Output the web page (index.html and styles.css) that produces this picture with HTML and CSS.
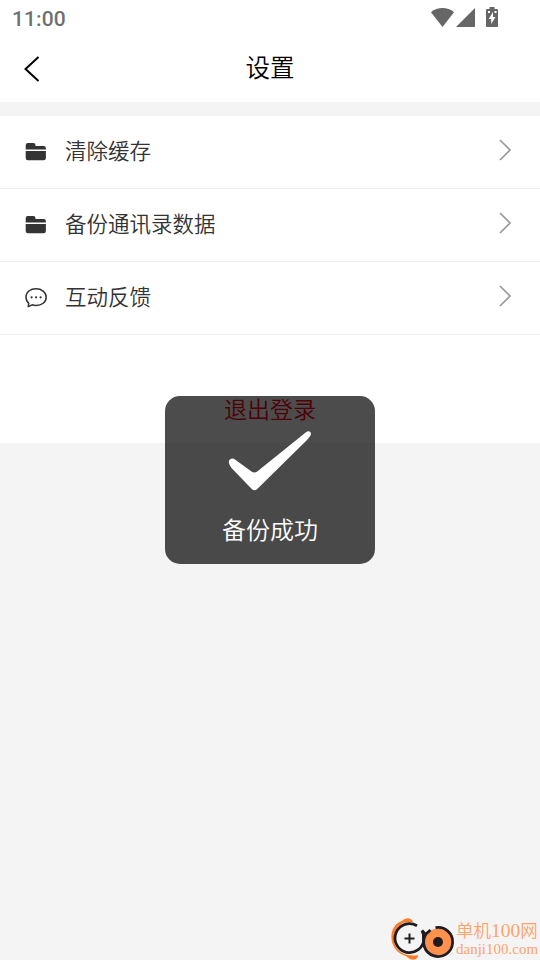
FILE: index.html
```html
<!DOCTYPE html>
<html lang="zh-CN">
<head>
<meta charset="utf-8">
<title>设置</title>
<link rel="stylesheet" href="styles.css">
</head>
<body>
<div class="screen">
  <header class="top">
    <div class="status">
      <span class="clock">11:00</span>
      <svg class="status-icons" width="70" height="28" viewBox="0 0 70 28">
        <path d="M1 11.200C7.500 5.600 17.500 5.600 24 11.200L12.500 26Z"/>
        <path d="M45 7V26H26Z"/>
        <path fill-rule="evenodd" d="M59.500 6h5v2H67a1 1 0 0 1 1 1v16a1 1 0 0 1-1 1H57a1 1 0 0 1-1-1V9a1 1 0 0 1 1-1h2.500ZM63 11l-4.300 7h2.500v5l4.300-7H63ZM58 10v2h2v-2ZM64.500 10v2h2v-2Z"/>
      </svg>
    </div>
    <div class="nav">
      <svg class="back" width="18" height="28" viewBox="0 0 18 28"><path d="M15.500 2 2.500 14 15.500 26"/></svg>
      <h1>设置</h1>
    </div>
  </header>
  <main>
    <ul class="list">
      <li>
        <svg class="icon" width="24" height="24" viewBox="0 0 24 24"><path d="M1.700 9.600V5.200a2.200 2.200 0 0 1 2.200-2.200h5.400a2.200 2.200 0 0 1 2.200 2.200v.8H19.700a2.200 2.200 0 0 1 2.200 2.200V9.600ZM1.700 11.100H21.900V18a2.200 2.200 0 0 1-2.200 2.200H3.900A2.200 2.200 0 0 1 1.700 18Z"/></svg>
        <span>清除缓存</span>
        <svg class="arrow" width="14" height="24" viewBox="0 0 14 24"><path d="m2 2 10 10L2 22"/></svg>
      </li>
      <li>
        <svg class="icon" width="24" height="24" viewBox="0 0 24 24"><path d="M1.700 9.600V5.200a2.200 2.200 0 0 1 2.200-2.200h5.400a2.200 2.200 0 0 1 2.200 2.200v.8H19.700a2.200 2.200 0 0 1 2.200 2.200V9.600ZM1.700 11.100H21.900V18a2.200 2.200 0 0 1-2.200 2.200H3.900A2.200 2.200 0 0 1 1.700 18Z"/></svg>
        <span>备份通讯录数据</span>
        <svg class="arrow" width="14" height="24" viewBox="0 0 14 24"><path d="m2 2 10 10L2 22"/></svg>
      </li>
      <li>
        <svg class="icon" width="24" height="24" viewBox="0 0 24 24"><path class="bubble" d="M4.800 17.300C2.900 15.800 2 13.600 2 11c0-5 4.500-8.200 10-8.200S22.200 6 22.200 11.200 17.700 19.400 12 19.400c-1.500 0-2.700-.2-3.900-.6L4.200 20.700Z"/><circle cx="7.600" cy="11.300" r="1.100"/><circle cx="12.100" cy="11.300" r="1.100"/><circle cx="16.600" cy="11.300" r="1.100"/></svg>
        <span>互动反馈</span>
        <svg class="arrow" width="14" height="24" viewBox="0 0 14 24"><path d="m2 2 10 10L2 22"/></svg>
      </li>
    </ul>
    <div class="logout">退出登录</div>
  </main>
  <div class="toast">
    <svg width="84" height="62" viewBox="0 0 84 62"><path d="M1.300 34C-.5 30 3.500 27 7 29.500L23.500 41.500Q26.500 43.500 29.500 41.200L78 2.300C81-.2 84.500 2.500 82.300 5.800Q81 8 79 10L29 59.200Q26.500 61.500 24 59.200L3.500 38Q2 36 1.300 34Z"/></svg>
    <p>备份成功</p>
  </div>
  <div class="watermark">
    <svg width="66" height="44" viewBox="0 0 66 44">
      <path class="swoosh" d="M23 6C21.500 1.500 16 1 12 5 3 8 0 17 2 26c2 8 8 12.500 14 14 5 5 11 5 12.500-1C18 41 8 37 5 29 2 20 6 10 14 6.500Z"/>
      <path class="ring" d="M27 9.700A14.500 14.500 0 1 0 34 23c0-3-.2-5-2-8.500l3.500 4"/>
      <circle class="disc" cx="48" cy="26" r="13.500"/>
      <path class="ring" d="M45.500 11.700A14.500 14.500 0 1 1 36 18l4.500-4M33.500 18v11"/>
      <circle class="hub" cx="48" cy="26" r="5"/>
      <path class="plus" d="M19.500 17.500v10M14.500 22.500h10"/>
    </svg>
    <div class="brand"><b>单机<i>100</i>网</b><small>danji100.com</small></div>
  </div>
</div>
</body>
</html>
```

FILE: styles.css
```css
* { box-sizing: border-box; margin: 0; padding: 0; }
body { background: #f4f4f4; font-family: "Noto Sans CJK SC DemiLight", "Noto Sans CJK SC", sans-serif; font-weight: 350; }
.screen { position: relative; height: 960px; overflow: hidden; }
.top { height: 102px; background: #fff; }
.status { height: 36px; display: flex; justify-content: space-between; padding: 0 40px 0 12px; }
.clock { font: 500 21px/38px Roboto, sans-serif; color: #707070; letter-spacing: .1px; }
.status-icons { fill: #666; margin-top: 1px; }
.nav { position: relative; height: 66px; }
.back { position: absolute; left: 22.500px; top: 19px; fill: none; stroke: #000; stroke-width: 2; }
h1 { font-size: 24.500px; line-height: 62px; font-weight: 350; text-align: center; color: #000; }
main { margin-top: 14px; height: 327px; background: #fff; }
.list { list-style: none; }
.list li { height: 73px; border-bottom: 1px solid #eee; display: flex; align-items: center; padding: 0 28px 4px 24px; }
.list span { flex: 1; margin: 0 0 0 17px; font-size: 21.500px; line-height: 32px; color: #333; }
.icon { fill: #333; position: relative; top: 1.500px; }
.bubble { fill: none; stroke: #333; stroke-width: 1.500; stroke-linejoin: round; }
.arrow { fill: none; stroke: #999; stroke-width: 1.700; }
.logout { margin-top: 56px; text-align: center; font-size: 23px; line-height: 34px; color: #ff0014; }
.toast { position: absolute; left: 165px; top: 396px; width: 210px; height: 168px; border-radius: 15px; background: rgba(0,0,0,.7); padding-top: 34px; display: flex; flex-direction: column; align-items: center; }
.toast svg { fill: #fff; }
.toast p { margin-top: 19px; font-size: 24px; line-height: 36px; color: #fff; font-weight: 350; }
.watermark { position: absolute; left: 390px; top: 916px; display: flex; height: 44px; overflow: hidden; }
.swoosh { fill: #ff7b25; }
.ring { fill: none; stroke: #211c20; stroke-width: 2.800; }
.disc { fill: #ff914d; }
.hub { fill: #211c20; }
.plus { stroke: #211c20; stroke-width: 2; }
.brand { display: flex; flex-direction: column; color: #ffa36c; padding-top: 2px; white-space: nowrap; }
.brand b { font-size: 17.500px; line-height: 24px; font-weight: 350; }
.brand i { font: 400 19.500px/20px "Liberation Serif", serif; }
.brand small { font: 400 15px/15px "Liberation Serif", serif; }
```
